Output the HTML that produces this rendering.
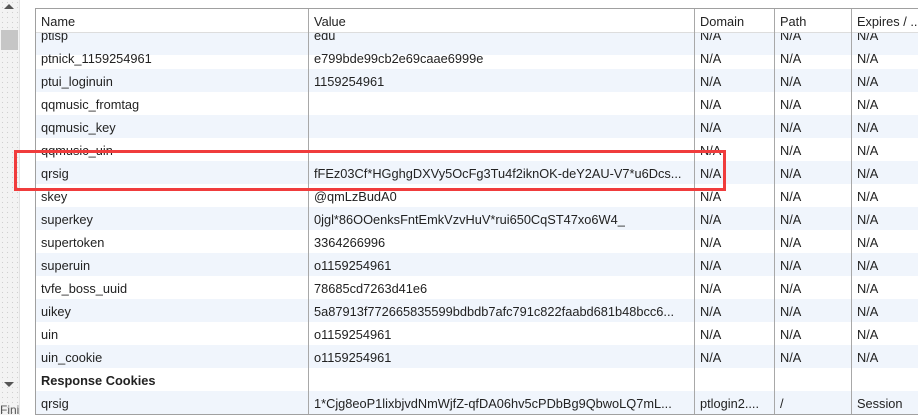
<!DOCTYPE html>
<html><head><meta charset="utf-8"><style>
body{margin:0;width:918px;height:415px;overflow:hidden;background:#fff;font-family:"Liberation Sans",sans-serif;font-size:12.8px;color:#222;position:relative}
.strip{position:absolute;left:0;top:0;width:19px;height:415px;background:#f3f3f3;background-image:radial-gradient(#cfcfcf 0.6px,transparent 0.8px);background-size:5px 5px;border-right:1px solid #e3e3e3}
.thumb{position:absolute;left:1px;top:30px;width:17px;height:20px;background:#c6c6c6}
.tbl{position:absolute;left:35px;top:8px;width:890px;height:405px;border:1px solid #a0a0a0;overflow:hidden}
.hdr{position:absolute;left:0;top:0;height:23px;width:100%;background:#fff;border-bottom:1px solid #ddd;z-index:2}
.c{position:absolute;top:1px;height:100%;white-space:nowrap;overflow:hidden;line-height:23px;padding-left:5px;box-sizing:border-box}
.row{position:absolute;left:0;width:100%;height:23px}
.alt{background:#f0f5fc}
.sep{position:absolute;top:0;bottom:0;width:1px;background:#a8a8a8;z-index:3}
</style></head><body>
<div class="strip"></div>
<div class="thumb"></div>
<div style="position:absolute;left:4px;top:4px;width:0;height:0;border-left:5px solid transparent;border-right:5px solid transparent;border-bottom:5px solid #555"></div>
<div style="position:absolute;left:4px;top:382px;width:0;height:0;border-left:5px solid transparent;border-right:5px solid transparent;border-top:5px solid #555"></div>
<div style="position:absolute;left:0;top:403px;font-size:12px;color:#555">Fini</div>
<div class="tbl">
<div class="hdr"><div class="c" style="left:0;width:273px">Name</div><div class="c" style="left:273px;width:386px">Value</div><div class="c" style="left:659px;width:80px">Domain</div><div class="c" style="left:739px;width:77px">Path</div><div class="c" style="left:816px;width:80px">Expires / ...</div></div>
<div class="sep" style="left:272px"></div><div class="sep" style="left:658px"></div><div class="sep" style="left:738px"></div><div class="sep" style="left:815px"></div>
<div id="rows"></div>
</div>
<div style="position:absolute;left:14px;top:150px;width:706px;height:35px;border:3px solid #f03c3c;z-index:5"></div>
<script>
var d=[["ptisp","edu","N/A","N/A","N/A"],["ptnick_1159254961","e799bde99cb2e69caae6999e","N/A","N/A","N/A"],["ptui_loginuin","1159254961","N/A","N/A","N/A"],["qqmusic_fromtag","","N/A","N/A","N/A"],["qqmusic_key","","N/A","N/A","N/A"],["qqmusic_uin","","N/A","N/A","N/A"],["qrsig","fFEz03Cf*HGghgDXVy5OcFg3Tu4f2iknOK-deY2AU-V7*u6Dcs...","N/A","N/A","N/A"],["skey","@qmLzBudA0","N/A","N/A","N/A"],["superkey","0jgl*86OOenksFntEmkVzvHuV*rui650CqST47xo6W4_","N/A","N/A","N/A"],["supertoken","3364266996","N/A","N/A","N/A"],["superuin","o1159254961","N/A","N/A","N/A"],["tvfe_boss_uuid","78685cd7263d41e6","N/A","N/A","N/A"],["uikey","5a87913f772665835599bdbdb7afc791c822faabd681b48bcc6...","N/A","N/A","N/A"],["uin","o1159254961","N/A","N/A","N/A"],["uin_cookie","o1159254961","N/A","N/A","N/A"],["<b>Response Cookies</b>","","","",""],["qrsig","1*Cjg8eoP1lixbjvdNmWjfZ-qfDA06hv5cPDbBg9QbwoLQ7mL...","ptlogin2....","/","Session"]];
var L=[0,273,659,739,816],W=[273,386,80,77,80],h="";
d.forEach(function(r,i){var t=i==0?14:37+(i-1)*23;var cls=(i%2==0)?"row alt":"row";if(i==15)cls="row";if(i==16)cls="row alt";
h+='<div class="'+cls+'" style="top:'+(i==0?23:t)+'px">';
r.forEach(function(v,j){h+='<div class="c" style="left:'+L[j]+'px;width:'+W[j]+'px'+(i==0?';top:-8px':'')+'">'+v+'</div>'});h+='</div>'});
document.getElementById('rows').innerHTML=h;
</script>
</body></html>
